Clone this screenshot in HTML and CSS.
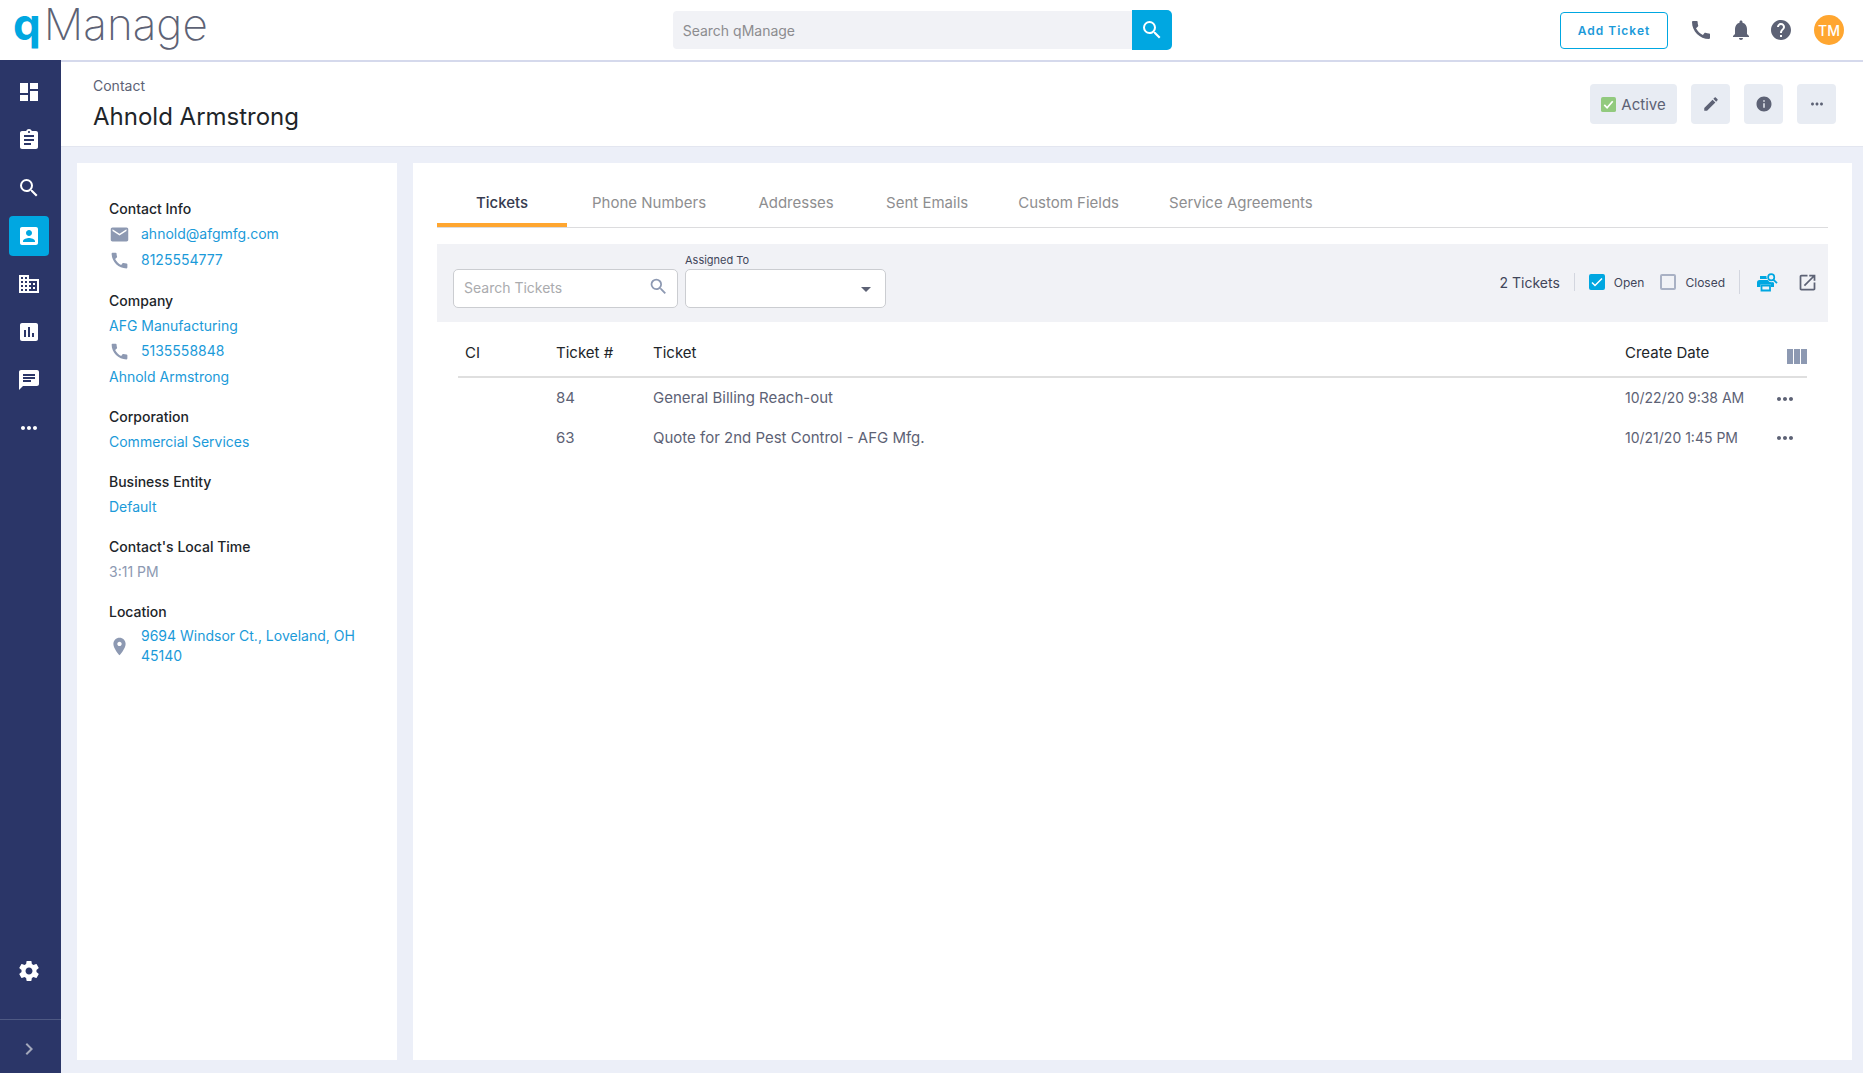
FILE: index.html
```html
<!DOCTYPE html>
<html lang="en">
<head>
<meta charset="utf-8">
<meta name="viewport" content="width=device-width, initial-scale=1">
<title>Ahnold Armstrong - qManage</title>
<link rel="stylesheet" href="styles.css">
</head>
<body>
<svg class="sprite" aria-hidden="true">
  <symbol id="i-search" viewBox="0 0 24 24"><path d="M15.5 14h-.79l-.28-.27A6.47 6.47 0 0 0 16 9.5 6.5 6.5 0 1 0 9.5 16c1.61 0 3.09-.59 4.23-1.57l.27.28v.79l5 4.99L20.49 19l-4.99-5zm-6 0C7.01 14 5 11.99 5 9.5S7.01 5 9.5 5 14 7.01 14 9.5 11.99 14 9.5 14z"/></symbol>
  <symbol id="i-phone" viewBox="0 0 24 24"><path d="M20.01 15.38c-1.23 0-2.42-.2-3.53-.56-.35-.12-.74-.03-1.01.24l-1.57 1.97c-2.83-1.35-5.48-3.9-6.89-6.83l1.95-1.66c.27-.28.35-.67.24-1.02-.37-1.11-.56-2.3-.56-3.53 0-.54-.45-.99-.99-.99H4.19C3.65 3 3 3.24 3 3.99 3 13.28 10.73 21 20.01 21c.71 0 .99-.63.99-1.18v-3.45c0-.54-.45-.99-.99-.99z"/></symbol>
  <symbol id="i-more" viewBox="0 0 24 24"><path d="M6 10c-1.100 0-2 .9-2 2s.9 2 2 2 2-.9 2-2-.9-2-2-2zm12 0c-1.100 0-2 .9-2 2s.9 2 2 2 2-.9 2-2-.9-2-2-2zm-6 0c-1.100 0-2 .9-2 2s.9 2 2 2 2-.9 2-2-.9-2-2-2z"/></symbol>
</svg>

<header class="topbar">
  <a class="logo" href="#"><span class="logo-q">q</span>Manage</a>
  <form class="global-search" role="search">
    <input type="search" placeholder="Search qManage" aria-label="Search qManage">
    <button type="button" aria-label="Search"><svg class="icon"><use href="#i-search"/></svg></button>
  </form>
  <div class="actions">
    <button class="add-ticket" type="button">Add Ticket</button>
    <div class="action-icons">
      <button type="button" aria-label="Phone"><svg class="icon"><use href="#i-phone"/></svg></button>
      <button type="button" aria-label="Notifications"><svg class="icon" viewBox="0 0 24 24"><path d="M12 22c1.100 0 2-.9 2-2h-4c0 1.100.89 2 2 2zm6-6v-5c0-3.070-1.640-5.640-4.500-6.320V4c0-.83-.67-1.500-1.500-1.500s-1.500.67-1.500 1.500v.68C7.630 5.360 6 7.920 6 11v5l-2 2v1h16v-1l-2-2z"/></svg></button>
      <button type="button" aria-label="Help"><svg class="icon" viewBox="0 0 24 24"><path d="M12 2C6.480 2 2 6.480 2 12s4.480 10 10 10 10-4.480 10-10S17.520 2 12 2zm1 17h-2v-2h2v2zm2.070-7.750l-.9.920C13.450 12.900 13 13.500 13 15h-2v-.5c0-1.100.45-2.100 1.170-2.830l1.240-1.260c.37-.36.59-.86.59-1.410 0-1.100-.9-2-2-2s-2 .9-2 2H8c0-2.210 1.790-4 4-4s4 1.790 4 4c0 .88-.36 1.680-.93 2.250z"/></svg></button>
    </div>
    <button class="avatar" type="button">TM</button>
  </div>
</header>

<div class="shell">
  <nav class="sidebar" aria-label="Main">
    <div class="nav-main">
      <a href="#" aria-label="Dashboard"><svg class="icon" viewBox="0 0 24 24"><path d="M3 13h8V3H3v10zm0 8h8v-6H3v6zm10 0h8V11h-8v10zm0-18v6h8V3h-8z"/></svg></a>
      <a href="#" aria-label="Tickets"><svg class="icon" viewBox="0 0 24 24"><path d="M19 3h-4.180C14.400 1.840 13.300 1 12 1c-1.300 0-2.400.84-2.820 2H5c-1.100 0-2 .9-2 2v14c0 1.100.9 2 2 2h14c1.100 0 2-.9 2-2V5c0-1.100-.9-2-2-2zm-7 0c.55 0 1 .45 1 1s-.45 1-1 1-1-.45-1-1 .45-1 1-1zm2 14H7v-2h7v2zm3-4H7v-2h10v2zm0-4H7V7h10v2z"/></svg></a>
      <a href="#" aria-label="Search"><svg class="icon"><use href="#i-search"/></svg></a>
      <a class="active" href="#" aria-label="Contacts" aria-current="page"><svg class="icon" viewBox="0 0 24 24"><path d="M3 5v14c0 1.100.89 2 2 2h14c1.100 0 2-.9 2-2V5c0-1.100-.9-2-2-2H5c-1.110 0-2 .9-2 2zm12 4c0 1.660-1.340 3-3 3s-3-1.340-3-3 1.340-3 3-3 3 1.340 3 3zm-9 8c0-2 4-3.100 6-3.100s6 1.100 6 3.100v1H6v-1z"/></svg></a>
      <a href="#" aria-label="Companies"><svg class="icon" viewBox="0 0 24 24"><path d="M12 7V3H2v18h20V7H12zM6 19H4v-2h2v2zm0-4H4v-2h2v2zm0-4H4V9h2v2zm0-4H4V5h2v2zm4 12H8v-2h2v2zm0-4H8v-2h2v2zm0-4H8V9h2v2zm0-4H8V5h2v2zm10 12h-8v-2h2v-2h-2v-2h2v-2h-2V9h8v10zm-2-8h-2v2h2v-2zm0 4h-2v2h2v-2z"/></svg></a>
      <a href="#" aria-label="Reports"><svg class="icon" viewBox="0 0 24 24"><path d="M19 3H5c-1.100 0-2 .9-2 2v14c0 1.100.9 2 2 2h14c1.100 0 2-.9 2-2V5c0-1.100-.9-2-2-2zM9 17H7v-7h2v7zm4 0h-2V7h2v10zm4 0h-2v-4h2v4z"/></svg></a>
      <a href="#" aria-label="Messages"><svg class="icon" viewBox="0 0 24 24"><path d="M20 2H4c-1.100 0-1.990.9-1.990 2L2 22l4-4h14c1.100 0 2-.9 2-2V4c0-1.100-.9-2-2-2zM6 9h12v2H6V9zm8 5H6v-2h8v2zm4-6H6V6h12v2z"/></svg></a>
      <a href="#" aria-label="More"><svg class="icon"><use href="#i-more"/></svg></a>
    </div>
    <a class="nav-settings" href="#" aria-label="Settings"><svg class="icon" viewBox="0 0 24 24"><path d="M19.430 12.980c.04-.32.07-.64.07-.98s-.03-.66-.07-.98l2.110-1.650c.19-.15.24-.42.12-.64l-2-3.460c-.12-.22-.39-.3-.61-.22l-2.490 1c-.52-.4-1.080-.73-1.690-.98l-.38-2.650C14.460 2.180 14.250 2 14 2h-4c-.25 0-.46.18-.49.42l-.38 2.650c-.61.25-1.170.59-1.690.98l-2.490-1c-.23-.09-.49 0-.61.22l-2 3.460c-.13.22-.07.49.12.64l2.110 1.650c-.04.32-.07.65-.07.98s.03.66.07.98l-2.110 1.650c-.19.15-.24.42-.12.64l2 3.460c.12.22.39.3.61.22l2.490-1c.52.4 1.080.73 1.690.98l.38 2.650c.03.24.24.42.49.42h4c.25 0 .46-.18.49-.42l.38-2.650c.61-.25 1.170-.59 1.690-.98l2.490 1c.23.09.49 0 .61-.22l2-3.460c.12-.22.07-.49-.12-.64l-2.110-1.650zM12 15.500c-1.930 0-3.500-1.570-3.500-3.500s1.570-3.500 3.500-3.500 3.500 1.570 3.500 3.500-1.570 3.500-3.500 3.500z"/></svg></a>
    <button class="nav-expand" type="button" aria-label="Expand menu"><svg class="icon" viewBox="0 0 24 24"><path d="M10 6L8.590 7.410 13.170 12l-4.580 4.590L10 18l6-6z"/></svg></button>
  </nav>

  <main class="page">
    <div class="page-head">
      <div class="page-title">
        <p>Contact</p>
        <h1>Ahnold Armstrong</h1>
      </div>
      <div class="page-actions">
        <button class="status" type="button">
          <svg class="tick" viewBox="0 0 16 16"><rect width="16" height="16" rx="2" fill="#92ca7e"/><path d="M3.500 8.500l3 3 6-7" fill="none" stroke="#fff" stroke-width="1.800"/></svg>
          Active
        </button>
        <button type="button" aria-label="Edit"><svg class="icon icon-18" viewBox="0 0 24 24"><path d="M3 17.250V21h3.750L17.810 9.940l-3.750-3.750L3 17.250zM20.710 7.040c.39-.39.39-1.020 0-1.410l-2.340-2.340c-.39-.39-1.020-.39-1.410 0l-1.830 1.830 3.750 3.750 1.830-1.830z"/></svg></button>
        <button type="button" aria-label="Information"><svg class="icon icon-18" viewBox="0 0 24 24"><path d="M12 2C6.480 2 2 6.480 2 12s4.480 10 10 10 10-4.480 10-10S17.520 2 12 2zm1 15h-2v-6h2v6zm0-8h-2V7h2v2z"/></svg></button>
        <button type="button" aria-label="More actions"><svg class="icon icon-18"><use href="#i-more"/></svg></button>
      </div>
    </div>

    <div class="columns">
      <aside class="card contact">
        <section>
          <h2>Contact Info</h2>
          <div class="line"><svg class="icon icon-21" viewBox="0 0 24 24"><path d="M20 4H4c-1.100 0-1.990.9-1.990 2L2 18c0 1.100.9 2 2 2h16c1.100 0 2-.9 2-2V6c0-1.100-.9-2-2-2zm0 4l-8 5-8-5V6l8 5 8-5v2z"/></svg><a href="#">ahnold@afgmfg.com</a></div>
          <div class="line"><svg class="icon icon-21"><use href="#i-phone"/></svg><a href="#">8125554777</a></div>
        </section>
        <section>
          <h2>Company</h2>
          <a href="#">AFG Manufacturing</a>
          <div class="line"><svg class="icon icon-21"><use href="#i-phone"/></svg><a href="#">5135558848</a></div>
          <a href="#">Ahnold Armstrong</a>
        </section>
        <section>
          <h2>Corporation</h2>
          <a href="#">Commercial Services</a>
        </section>
        <section>
          <h2>Business Entity</h2>
          <a href="#">Default</a>
        </section>
        <section>
          <h2>Contact's Local Time</h2>
          <p>3:11 PM</p>
        </section>
        <section>
          <h2>Location</h2>
          <div class="line address"><svg class="icon icon-21" viewBox="0 0 24 24"><path d="M12 2C8.130 2 5 5.130 5 9c0 5.250 7 13 7 13s7-7.750 7-13c0-3.870-3.130-7-7-7zm0 9.500c-1.380 0-2.500-1.120-2.500-2.500s1.120-2.500 2.500-2.500 2.500 1.120 2.500 2.500-1.120 2.500-2.500 2.500z"/></svg><a href="#">9694 Windsor Ct., Loveland, OH 45140</a></div>
        </section>
      </aside>

      <section class="card detail">
        <div class="tabs" role="tablist">
          <button role="tab" type="button" aria-selected="true">Tickets</button>
          <button role="tab" type="button" aria-selected="false">Phone Numbers</button>
          <button role="tab" type="button" aria-selected="false">Addresses</button>
          <button role="tab" type="button" aria-selected="false">Sent Emails</button>
          <button role="tab" type="button" aria-selected="false">Custom Fields</button>
          <button role="tab" type="button" aria-selected="false">Service Agreements</button>
        </div>

        <div class="toolbar">
          <div class="ticket-search">
            <input type="search" placeholder="Search Tickets" aria-label="Search Tickets">
            <svg class="icon icon-21"><use href="#i-search"/></svg>
          </div>
          <div class="assigned">
            <label for="assigned">Assigned To</label>
            <div class="select">
              <select id="assigned"><option></option></select>
              <svg class="icon" viewBox="0 0 24 24"><path d="M7 10l5 5 5-5z"/></svg>
            </div>
          </div>
          <div class="filters">
            <span class="count">2 Tickets</span>
            <div class="checks">
              <label><input type="checkbox" checked>Open</label>
              <label><input type="checkbox">Closed</label>
            </div>
            <div class="tools">
              <button class="print" type="button" aria-label="Print preview"><svg viewBox="0 0 21 19"><path d="M3 3h6.500a5 5 0 0 0 .5 3H3z"/><path d="M2.500 7h8.200a4.500 4.500 0 0 0 5.300 2l1 1v4h-3v-2.500H3.500V14H0V9.500A2.500 2.500 0 0 1 2.500 7z"/><path d="M4.500 12.500h8.500v5H4.500z" fill="#f1f2f6" stroke="currentColor" stroke-width="1.800"/><circle cx="14.200" cy="4.300" r="3.100" fill="none" stroke="currentColor" stroke-width="1.700"/><path d="M16.300 6.600l3.700 3.600" stroke="currentColor" stroke-width="1.800"/></svg></button>
              <button type="button" aria-label="Open in new window"><svg class="icon icon-21" viewBox="0 0 24 24"><path d="M19 19H5V5h7V3H5c-1.110 0-2 .9-2 2v14c0 1.100.89 2 2 2h14c1.100 0 2-.9 2-2v-7h-2v7zM14 3v2h3.590l-9.830 9.830 1.410 1.410L19 6.410V10h2V3h-7z"/></svg></button>
            </div>
          </div>
        </div>

        <table class="tickets">
          <thead>
            <tr><th class="c-ci">CI</th><th class="c-num">Ticket #</th><th>Ticket</th><th class="c-date">Create Date</th><th class="c-menu"><button type="button" aria-label="Choose columns"><svg viewBox="0 0 20 15"><path d="M0 0h6v15H0zM7 0h6v15H7zM14 0h6v15h-6z"/></svg></button></th></tr>
          </thead>
          <tbody>
            <tr><td></td><td>84</td><td>General Billing Reach-out</td><td class="date">10/22/20 9:38 AM</td><td class="c-menu"><button type="button" aria-label="Ticket 84 actions"><svg class="icon"><use href="#i-more"/></svg></button></td></tr>
            <tr><td></td><td>63</td><td>Quote for 2nd Pest Control - AFG Mfg.</td><td class="date">10/21/20 1:45 PM</td><td class="c-menu"><button type="button" aria-label="Ticket 63 actions"><svg class="icon"><use href="#i-more"/></svg></button></td></tr>
          </tbody>
        </table>
      </section>
    </div>
  </main>
</div>
</body>
</html>
```

FILE: styles.css
```css
:root {
  --blue: #00a7e1;
  --link: #1b9ad9;
  --navy: #2b3668;
  --slate: #5d6275;
  --muted: #8d99b2;
  --ink: #212529;
  --orange: #ffa630;
  --panel: #f1f2f6;
}

* { box-sizing: border-box; }

body {
  margin: 0;
  min-height: 100vh;
  display: flex;
  flex-direction: column;
  font-family: Inter, "Open Sans", sans-serif;
  font-size: 14px;
  color: var(--slate);
  background: #eceff8;
}

h1, h2, p { margin: 0; font-weight: 400; }
a { color: var(--link); text-decoration: none; }
button { margin: 0; padding: 0; border: 0; background: none; font: inherit; color: inherit; cursor: pointer; }
button svg { display: block; }
input, select { font: inherit; color: inherit; }
input[type="search"] { appearance: none; outline: 0; }

.sprite { display: none; }
.icon { width: 24px; height: 24px; flex: none; display: block; fill: currentColor; }
.icon-21 { width: 21px; height: 21px; }
.icon-18 { width: 18px; height: 18px; }

/* Top bar */
.topbar {
  display: grid;
  grid-template-columns: calc(36% + 2px) minmax(0, 499px) 1fr;
  align-items: center;
  height: 60px;
  padding-bottom: 2px;
  background: #fff;
}
.logo {
  padding: 0 0 12px 13px;
  font-size: 44px;
  line-height: 48px;
  font-weight: 200;
  color: var(--slate);
}
.logo-q { margin-right: 3px; font-weight: 700; color: var(--blue); }

.global-search { display: flex; align-items: center; }
.global-search input {
  flex: 1;
  min-width: 0;
  height: 38px;
  padding: 0 10px;
  border: 0;
  border-radius: 4px 0 0 4px;
  background: var(--panel);
}
.global-search input::placeholder { color: #8c8c8f; }
.global-search button {
  display: grid;
  place-items: center;
  width: 40px;
  height: 40px;
  border-radius: 0 5px 5px 0;
  background: var(--blue);
  color: #fff;
}

.actions { display: flex; align-items: center; justify-content: flex-end; gap: 21px; padding-right: 19px; }
.action-icons { display: flex; gap: 16px; }
.add-ticket {
  width: 108px;
  height: 37px;
  border: 1px solid var(--blue);
  border-radius: 4px;
  font-size: 12px;
  font-weight: 600;
  letter-spacing: 1px;
  color: var(--link);
}
.avatar {
  width: 30px;
  height: 30px;
  border-radius: 50%;
  background: var(--orange);
  color: #fff;
  font-weight: 500;
}

/* Side navigation */
.shell { flex: 1; display: flex; }
.sidebar {
  flex: none;
  width: 61px;
  display: flex;
  flex-direction: column;
  background: var(--navy);
  color: #fff;
}
.sidebar a { display: grid; place-items: center; width: 40px; height: 40px; border-radius: 4px; color: #fff; }
.sidebar .active { background: var(--blue); }
.nav-main { flex: 1; display: flex; flex-direction: column; gap: 8px; padding: 12px 9px; }
.nav-settings { margin: 0 9px 28px; }
.nav-expand {
  height: 54px;
  padding: 4px 17px 0;
  border-top: 1px solid #4e5983;
  color: #a3a8bb;
}

/* Page header */
.page { flex: 1; min-width: 0; display: flex; flex-direction: column; }
.page-head {
  display: flex;
  justify-content: space-between;
  padding: 16px 27px 16px 32px;
  height: 87px;
  border-top: 2px solid #d5d9ec;
  border-bottom: 1px solid #e3e6f0;
  background: #fff;
}
.page-title p { font-size: 14px; line-height: 16px; }
.page-title h1 { padding-top: 7px; font-size: 24px; line-height: 32px; color: var(--ink); }
.page-actions { display: flex; gap: 14px; padding-top: 6px; }
.page-actions button {
  display: flex;
  align-items: center;
  justify-content: center;
  width: 39px;
  height: 40px;
  border-radius: 4px;
  background: #e8ecf3;
}
.page-actions .status { width: 87px; gap: 5px; font-size: 15px; }
.tick { width: 15px; height: 15px; }

/* Cards */
.columns { flex: 1; display: flex; gap: 16px; padding: 16px 11px 13px 16px; }
.card { background: #fff; }

.contact { flex: none; width: 320px; padding: 33px 32px; display: flex; flex-direction: column; gap: 15px; }
.contact h2, .contact section > a, .contact p { display: block; line-height: 25px; }
.contact h2 { font-size: 14px; font-weight: 500; color: var(--ink); }
.contact p, .contact .icon { color: var(--muted); }
.line { display: flex; align-items: center; gap: 11px; line-height: 26px; }
.address { line-height: 20px; padding-top: 2px; }

.detail { flex: 1; min-width: 0; padding: 16px 24px; }

.tabs { display: flex; border-bottom: 1px solid #dcdcde; }
.tabs button {
  min-width: 130px;
  height: 48px;
  padding: 2px 25px 0;
  border-bottom: 4px solid transparent;
  font-size: 15px;
  color: #8e8e90;
}
.tabs [aria-selected="true"] { border-bottom-color: var(--orange); color: #363b4f; font-weight: 500; }

/* Ticket filters */
.toolbar {
  display: flex;
  align-items: flex-end;
  gap: 7px;
  margin-top: 16px;
  padding: 8px 10px 14px 16px;
  height: 78px;
  background: var(--panel);
}
.ticket-search, .select {
  display: flex;
  align-items: center;
  height: 39px;
  border: 1px solid #cbcdd1;
  border-radius: 5px;
  background: #fff;
}
.ticket-search { width: 225px; padding: 0 8px 4px 10px; color: var(--muted); }
.ticket-search input { flex: 1; min-width: 0; padding: 2px 0 0; border: 0; background: none; color: var(--slate); }
.ticket-search input::placeholder { color: #aaabae; }
.assigned label { display: block; font-size: 11px; line-height: 18px; color: #41465a; }
.select { position: relative; width: 201px; }
.select select { width: 100%; height: 100%; padding: 0 36px 0 10px; border: 0; appearance: none; background: none; }
.select .icon { position: absolute; right: 7px; top: 7px; pointer-events: none; }

.filters { display: flex; align-items: center; align-self: center; gap: 14px; margin-left: auto; padding-top: 4px; }
.count { color: #41465a; }
.checks { display: flex; gap: 16px; padding-left: 14px; border-left: 1px solid #d3d6df; }
.checks label { display: flex; align-items: center; gap: 9px; height: 18px; font-size: 12px; color: #41465a; }
.checks input {
  appearance: none;
  width: 16px;
  height: 16px;
  margin: 0;
  border: 2px solid #a9b1c4;
  border-radius: 2px;
}
.checks input:checked {
  border-color: var(--blue);
  background: var(--blue) url("data:image/svg+xml,%3Csvg xmlns='http://www.w3.org/2000/svg' viewBox='0 0 12 12'%3E%3Cpath d='M1 6.500l3 3 7-7' fill='none' stroke='white' stroke-width='1.500'/%3E%3C/svg%3E") center / 12px 12px no-repeat;
}
.tools { display: flex; align-items: center; gap: 19px; height: 24px; padding-left: 17px; border-left: 1px solid #d3d6df; }
.print svg { width: 21px; height: 19px; color: var(--blue); fill: currentColor; }

/* Ticket table */
.tickets { width: calc(100% - 42px); margin: 12px 21px 0; border-collapse: collapse; table-layout: fixed; font-size: 15px; }
.tickets th, .tickets td { height: 40px; padding: 0 7px; text-align: left; font-weight: 400; }
.tickets th { height: 43px; padding-bottom: 6px; border-bottom: 2px solid #dfdfdf; color: var(--ink); }
.tickets .date { font-size: 14px; }
.c-ci { width: 91px; }
.c-num { width: 97px; }
.c-date { width: 152px; }
.tickets .c-menu { width: 37px; padding: 0; }
.tickets th svg { width: 20px; height: 15px; margin: 6px 0 0 17px; fill: var(--muted); }
.tickets td svg { margin: 6px 0 0 3px; }
```
